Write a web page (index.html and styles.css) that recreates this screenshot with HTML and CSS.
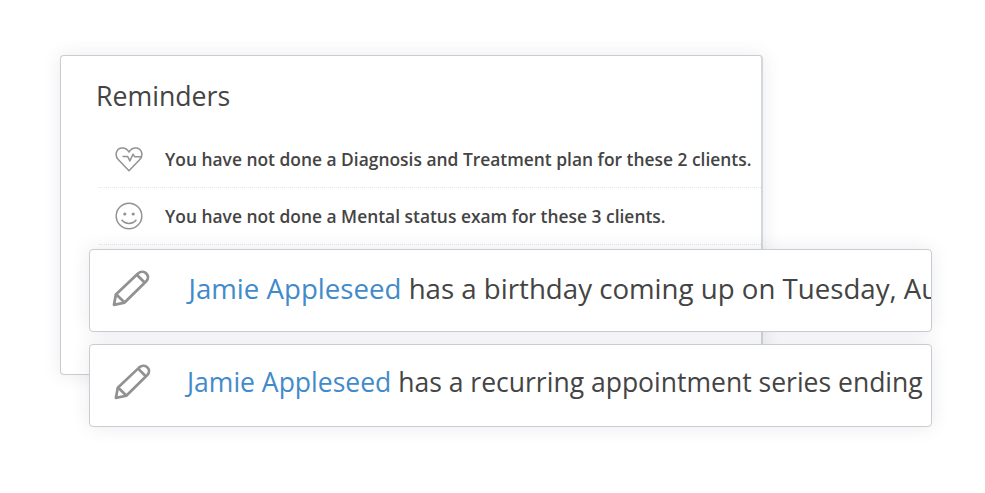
FILE: index.html
```html
<!DOCTYPE html>
<html lang="en">
<head>
    <meta charset="UTF-8" />
    <meta name="viewport" content="width=device-width, initial-scale=1.0" />
    <title>Reminders</title>
    <link rel="stylesheet" href="styles.css">
</head>
<body>
    <div class="panel">
        <h1>Reminders</h1>
        <ul class="reminders">
            <li>
                <svg class="icon" viewBox="0 0 28 28">
                    <path d="M14 25.7 L3.2 14.6 C-0.4 10.8 0.8 3.9 6.4 3 C10 2.5 12.4 4.4 14 7 C15.6 4.4 18 2.5 21.6 3 C27.2 3.9 28.4 10.8 24.8 14.6 Z" />
                    <path d="M7.5 11.6 H12.7 L14.9 15.9 L18 9.2 L19.7 11.8 H26.3" />
                </svg>
                <span>You have not done a Diagnosis and Treatment plan for these 2 clients.</span>
            </li>
            <li>
                <svg class="icon" viewBox="0 0 28 28">
                    <circle cx="14" cy="14" r="12.8" />
                    <path d="M6.6 17.8 C10.4 22.6 17.6 22.6 21.4 17.8" />
                    <circle class="eye" cx="9.8" cy="12" r="1.6" />
                    <circle class="eye" cx="18.2" cy="12" r="1.6" />
                </svg>
                <span>You have not done a Mental status exam for these 3 clients.</span>
            </li>
        </ul>
    </div>
    <div class="alerts">
        <div class="alert birthday">
            <svg class="pencil" viewBox="0 0 38 38">
                <path d="M2 35.8 L3.9 25.4 L26 4.5 C31.8 -0.5 39.6 6.8 34 12.6 L12.6 33.6 Z" />
                <path d="M4.4 25.4 L12.6 33.4 M24.8 5.8 L32.8 13.8" />
            </svg>
            <p><a>Jamie Appleseed</a> has a birthday coming up on Tuesday, Au</p>
        </div>
        <div class="alert recurring">
            <svg class="pencil" viewBox="0 0 38 38">
                <path d="M2 35.8 L3.9 25.4 L26 4.5 C31.8 -0.5 39.6 6.8 34 12.6 L12.6 33.6 Z" />
                <path d="M4.4 25.4 L12.6 33.4 M24.8 5.8 L32.8 13.8" />
            </svg>
            <p><a>Jamie Appleseed</a> has a recurring appointment series ending</p>
        </div>
    </div>
</body>
</html>
```
FILE: styles.css
```css
* {
    box-sizing: border-box;
}

body {
    font-family: 'Open Sans', sans-serif;
    background: #fff;
    color: #444;
    margin: 0;
    padding: 55px 0 0 60px;
    height: 493px;
    overflow: hidden;
}

.panel {
    width: 703px;
    height: 320px;
    padding: 22px 0 0 35px;
    background: #fff;
    border: 1px solid #c9ccd0;
    border-right: 2px solid #d3d6da;
    border-radius: 4px;
    box-shadow: 0 0 18px rgba(70, 85, 105, 0.12);
}

h1 {
    margin: 0;
    font-size: 26.7px;
    font-weight: 400;
    line-height: 36px;
}

.reminders {
    list-style: none;
    margin: 17px 0 0 3px;
    padding: 0;
}

.reminders li {
    display: flex;
    align-items: center;
    height: 57px;
    padding-left: 16px;
    border-bottom: 1px dotted #e6e6e6;
    font-size: 17.4px;
    font-weight: 600;
    white-space: nowrap;
}

.icon {
    width: 28px;
    height: 28px;
    margin-right: 22px;
    fill: none;
    stroke: #929292;
    stroke-width: 1.5;
    stroke-linejoin: round;
}

.icon .eye {
    fill: #929292;
    stroke: none;
}

.alerts {
    display: flex;
    flex-direction: column;
    gap: 12px;
    width: 843px;
    margin: -126px 0 0 29px;
}

.alert {
    display: flex;
    align-items: center;
    height: 83px;
    padding-left: 22px;
    overflow: hidden;
    background: #fff;
    border: 1px solid #c9ccd0;
    border-radius: 4px;
    box-shadow: 0 0 18px rgba(70, 85, 105, 0.12);
    white-space: nowrap;
}

.alert p {
    margin: 0;
}

.alert a {
    color: #428bca;
}

.pencil {
    flex: none;
    width: 38px;
    height: 38px;
    margin: 0 38.5px 5px 0;
    fill: none;
    stroke: #929292;
    stroke-width: 2.8;
    stroke-linejoin: round;
}

.birthday {
    font-size: 27.65px;
}

.birthday p {
    padding-bottom: 5px;
}

.recurring {
    padding-left: 24px;
    font-size: 26.53px;
}

.recurring .pencil {
    width: 37px;
    height: 37px;
    margin: 0 36px 9px 0;
}

.recurring p {
    padding-bottom: 7px;
}
```
